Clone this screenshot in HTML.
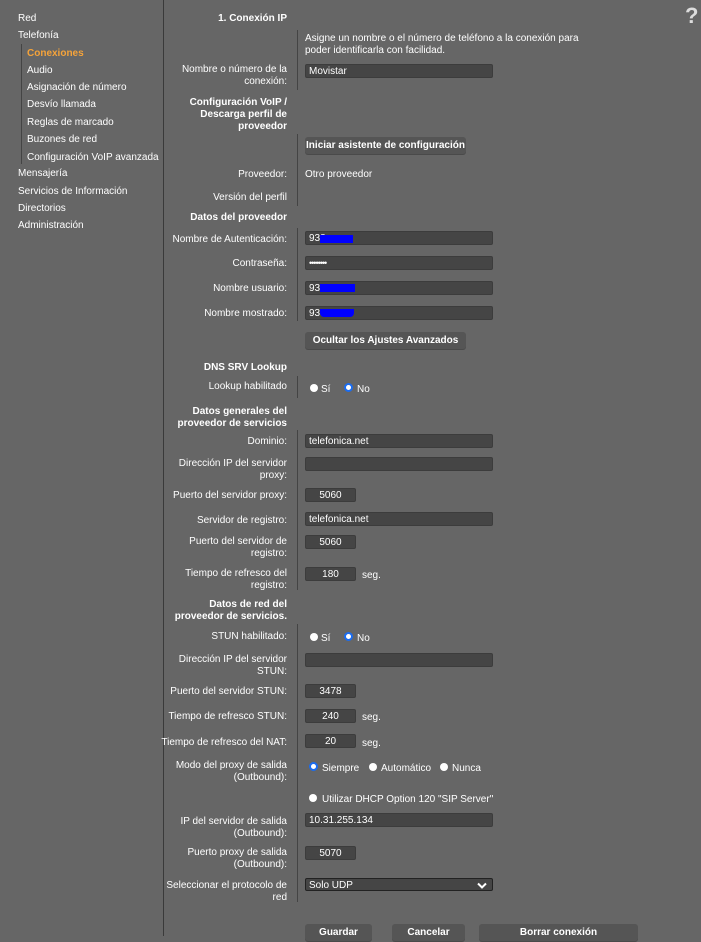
<!DOCTYPE html>
<html><head><meta charset="utf-8"><style>
*{margin:0;padding:0;box-sizing:border-box}
body{width:701px;height:936px;background:#666;font-family:"Liberation Sans",Arial,sans-serif;font-size:10px;color:#fff;position:relative;overflow:hidden}
div,span{position:absolute;white-space:nowrap;margin-top:1.5px}
.in,.btn,.vl,.r,.rs,.blue,.bar{margin-top:0}
.sb{left:18px}
.l{right:414px;text-align:right;line-height:12px}
.b{font-weight:bold}
.in{left:305px;width:188px;height:14px;background:#454545;border:1px solid #3c3c3c;border-radius:2px;padding-left:3px;line-height:13px}
.sm{width:51px;text-align:center;padding:0}
.btn{height:17px;background:#555;border-radius:3px;text-align:center;font-weight:bold;line-height:18px;box-shadow:0 1px 0 #4a4a4a}
.vl{left:297px;width:1px;background:#444}
.r{width:8px;height:8px;border-radius:50%;background:#fff}
.rs{width:9px;height:9px;border-radius:50%;background:#fff;border:2px solid #1a6cf0}
.blue{background:#0000ff;height:8px}
</style></head><body>
<div class="bar" style="left:163px;top:0;width:1px;height:936px;background:#3a3a3a"></div>
<div class="bar" style="left:21px;top:44px;width:1px;height:120px;background:#444"></div>
<div class="sb" style="top:11px">Red</div>
<div class="sb" style="top:28px">Telefonía</div>
<div style="left:27px;top:46px;color:#f5a33a;font-weight:bold">Conexiones</div>
<div style="left:27px;top:63px">Audio</div>
<div style="left:27px;top:80px">Asignación de número</div>
<div style="left:27px;top:97px">Desvío llamada</div>
<div style="left:27px;top:115px">Reglas de marcado</div>
<div style="left:27px;top:132px">Buzones de red</div>
<div style="left:27px;top:150px">Configuración VoIP avanzada</div>
<div class="sb" style="top:166px">Mensajería</div>
<div class="sb" style="top:184px">Servicios de Información</div>
<div class="sb" style="top:201px">Directorios</div>
<div class="sb" style="top:218px">Administración</div>

<div style="left:685px;top:1px;font-size:22px;color:#ddd;font-weight:bold">?</div>

<div class="vl" style="top:30px;height:60px"></div>
<div class="vl" style="top:134px;height:72px"></div>
<div class="vl" style="top:228px;height:93px"></div>
<div class="vl" style="top:376px;height:22px"></div>
<div class="vl" style="top:430px;height:160px"></div>
<div class="vl" style="top:624px;height:278px"></div>

<div class="l b" style="top:11px">1. Conexión IP</div>
<div style="left:305px;top:31px;line-height:12px">Asigne un nombre o el número de teléfono a la conexión para<br>poder identificarla con facilidad.</div>
<div class="l" style="top:62px">Nombre o número de la<br>conexión:</div>
<div class="in" style="top:64px">Movistar</div>
<div class="l b" style="top:95px">Configuración VoIP /<br>Descarga perfil de<br>proveedor</div>
<div class="btn" style="left:305px;top:137px;width:161px">Iniciar asistente de configuración</div>
<div class="l" style="top:167px">Proveedor:</div>
<div style="left:305px;top:167px">Otro proveedor</div>
<div class="l" style="top:190px">Versión del perfil</div>
<div class="l b" style="top:210px">Datos del proveedor</div>

<div class="l" style="top:232px">Nombre de Autenticación:</div>
<div class="in" style="top:231px">938</div><div class="blue" style="left:320px;top:235px;width:33px"></div>
<div class="l" style="top:256px">Contraseña:</div>
<div class="in" style="top:256px;letter-spacing:-1px;font-size:9px">••••••••</div>
<div class="l" style="top:281px">Nombre usuario:</div>
<div class="in" style="top:281px">938</div><div class="blue" style="left:320px;top:284px;width:35px"></div>
<div class="l" style="top:306px">Nombre mostrado:</div>
<div class="in" style="top:306px">938</div><div class="blue" style="left:320px;top:309px;width:34px;border-radius:0 0 4px 4px"></div>
<div class="btn" style="left:305px;top:332px;width:161px">Ocultar los Ajustes Avanzados</div>

<div class="l b" style="top:360px">DNS SRV Lookup</div>
<div class="l" style="top:379px">Lookup habilitado</div>
<div class="r" style="left:310px;top:384px"></div><div style="left:321px;top:382px">Sí</div>
<div class="rs" style="left:344px;top:383px"></div><div style="left:357px;top:382px">No</div>

<div class="l b" style="top:404px">Datos generales del<br>proveedor de servicios</div>
<div class="l" style="top:434px">Dominio:</div>
<div class="in" style="top:434px">telefonica.net</div>
<div class="l" style="top:456px">Dirección IP del servidor<br>proxy:</div>
<div class="in" style="top:457px"></div>
<div class="l" style="top:488px">Puerto del servidor proxy:</div>
<div class="in sm" style="top:488px">5060</div>
<div class="l" style="top:513px">Servidor de registro:</div>
<div class="in" style="top:512px">telefonica.net</div>
<div class="l" style="top:534px">Puerto del servidor de<br>registro:</div>
<div class="in sm" style="top:535px">5060</div>
<div class="l" style="top:566px">Tiempo de refresco del<br>registro:</div>
<div class="in sm" style="top:567px">180</div><div style="left:362px;top:568px">seg.</div>

<div class="l b" style="top:597px">Datos de red del<br>proveedor de servicios.</div>
<div class="l" style="top:629px">STUN habilitado:</div>
<div class="r" style="left:310px;top:633px"></div><div style="left:321px;top:631px">Sí</div>
<div class="rs" style="left:344px;top:632px"></div><div style="left:357px;top:631px">No</div>
<div class="l" style="top:652px">Dirección IP del servidor<br>STUN:</div>
<div class="in" style="top:653px"></div>
<div class="l" style="top:684px">Puerto del servidor STUN:</div>
<div class="in sm" style="top:684px">3478</div>
<div class="l" style="top:709px">Tiempo de refresco STUN:</div>
<div class="in sm" style="top:709px">240</div><div style="left:362px;top:710px">seg.</div>
<div class="l" style="top:735px">Tiempo de refresco del NAT:</div>
<div class="in sm" style="top:734px">20</div><div style="left:362px;top:736px">seg.</div>

<div class="l" style="top:758px">Modo del proxy de salida<br>(Outbound):</div>
<div class="rs" style="left:309px;top:762px"></div><div style="left:322px;top:761px">Siempre</div>
<div class="r" style="left:369px;top:763px"></div><div style="left:381px;top:761px">Automático</div>
<div class="r" style="left:440px;top:763px"></div><div style="left:452px;top:761px">Nunca</div>
<div class="r" style="left:309px;top:794px"></div><div style="left:322px;top:792px">Utilizar DHCP Option 120 "SIP Server"</div>

<div class="l" style="top:814px">IP del servidor de salida<br>(Outbound):</div>
<div class="in" style="top:813px">10.31.255.134</div>
<div class="l" style="top:845px">Puerto proxy de salida<br>(Outbound):</div>
<div class="in sm" style="top:846px">5070</div>
<div class="l" style="top:878px">Seleccionar el protocolo de<br>red</div>
<div class="in" style="top:878px;height:13px;border-color:#222">Solo UDP<svg style="position:absolute;right:5px;top:3px" width="10" height="7" viewBox="0 0 10 7"><path d="M1 1.5L5 5.5L9 1.5" stroke="#fff" stroke-width="2" fill="none"/></svg></div>

<div class="btn" style="left:305px;top:924px;width:67px">Guardar</div>
<div class="btn" style="left:392px;top:924px;width:73px">Cancelar</div>
<div class="btn" style="left:479px;top:924px;width:159px">Borrar conexión</div>
</body></html>
